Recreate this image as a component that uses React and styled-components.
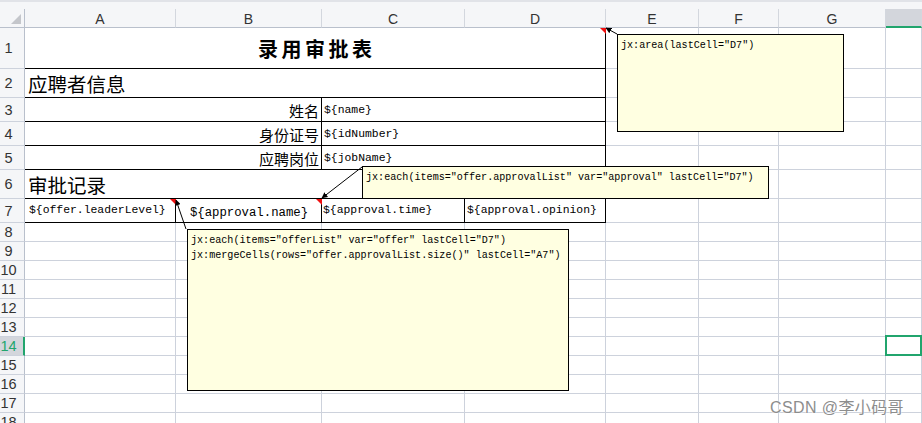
import React from 'react';
import styled, { createGlobalStyle, css } from 'styled-components';

const GRID = '#cdd2dc';
const HEAD_LINE = '#b9c0cc';
const DARK = '#000';
const GREEN = '#21a56d';
const HEAD_BG = '#f5f6f8';
const SEL_BG = '#d3d6dc';

const Global = createGlobalStyle`
  html, body { margin: 0; padding: 0; background: #fff; }
  body { width: 922px; height: 423px; overflow: hidden; }
`;

const Page = styled.div`
  position: relative;
  width: 922px;
  height: 423px;
  overflow: hidden;
  background: #fff;
  font-family: "Liberation Sans", Arial, sans-serif;
`;

const TopStrip = styled.div`
  box-sizing: border-box;
  height: 9px;
  background: ${HEAD_BG};
  border-top: 2px solid #e1e3e8;
`;

const Sheet = styled.div`
  display: grid;
  grid-template-columns: 25px 151px 146px 143px 141px 93px 80px 107px 1fr;
  grid-template-rows: 19px 41px 29px 24px 24px 24px 29px 24px repeat(11, 19px);
`;

const Corner = styled.div`
  position: relative;
  box-sizing: border-box;
  background: ${HEAD_BG};
  border-right: 1px solid ${HEAD_LINE};
  border-bottom: 1px solid ${HEAD_LINE};
  &::after {
    content: '';
    position: absolute;
    left: 11px;
    top: 5px;
    width: 0;
    height: 0;
    border-bottom: 10px solid #c4c6cb;
    border-left: 10px solid transparent;
  }
`;

const ColHead = styled.div`
  box-sizing: border-box;
  display: flex;
  align-items: center;
  justify-content: center;
  padding-top: 1px;
  font-size: 14px;
  color: #333;
  background: ${p => (p.$sel ? SEL_BG : HEAD_BG)};
  border-right: 1px solid #d3d7de;
  border-bottom: ${p => (p.$sel ? `2px solid ${GREEN}` : `1px solid ${HEAD_LINE}`)};
`;

const RowHead = styled.div`
  box-sizing: border-box;
  display: flex;
  align-items: center;
  justify-content: center;
  padding-right: ${p => (p.$sel ? 6 : 7)}px;
  font-size: 14.5px;
  color: ${p => (p.$sel ? GREEN : '#333')};
  background: ${p => (p.$sel ? SEL_BG : HEAD_BG)};
  border-right: ${p => (p.$sel ? `2px solid ${GREEN}` : `1px solid ${HEAD_LINE}`)};
  border-bottom: 1px solid ${GRID};
`;

const Cell = styled.div`
  position: relative;
  box-sizing: border-box;
  min-width: 0;
  display: flex;
  white-space: nowrap;
  grid-column: span ${p => p.$span || 1};
  align-items: ${p => p.$v || 'flex-end'};
  justify-content: ${p => p.$h || 'flex-start'};
  padding: ${p => p.$pad || '0'};
  border-right: 1px solid ${p => (p.$r ? DARK : GRID)};
  border-bottom: 1px solid ${p => (p.$b ? DARK : GRID)};
  ${p => p.$flag && css`
    &::before {
      content: '';
      position: absolute;
      top: 0;
      right: -1px;
      width: 0;
      height: 0;
      border-top: 6px solid #f01010;
      border-left: 6px solid transparent;
      z-index: 2;
    }
  `}
  ${p => p.$sel && css`
    &::after {
      content: '';
      position: absolute;
      top: -2px;
      left: -1px;
      right: -1px;
      bottom: -1px;
      border: 2px solid ${GREEN};
      z-index: 3;
    }
  `}
`;

const Title = styled.span`
  font-family: "Noto Sans CJK SC", sans-serif;
  font-weight: 700;
  font-size: 20px;
  letter-spacing: 3.5px;
  padding-left: 3.5px;
  color: #000;
  line-height: 1;
`;

const Section = styled.span`
  font-family: "Noto Sans CJK SC", sans-serif;
  font-size: 19.5px;
  line-height: 26px;
  color: #000;
`;

const Label = styled.span`
  font-family: "Noto Sans CJK SC", sans-serif;
  font-size: 15px;
  line-height: 20px;
  color: #000;
`;

const Value = styled.span`
  font-family: "Liberation Mono", "Noto Sans CJK SC", monospace;
  font-size: ${p => p.$size || 11.4}px;
  line-height: 17px;
  color: #000;
`;

const Note = styled.div`
  position: absolute;
  box-sizing: border-box;
  z-index: 5;
  background: #ffffe1;
  border: 1px solid #000;
  padding: 3px 3px;
  font-family: "Liberation Mono", monospace;
  font-size: 10.1px;
  line-height: 15px;
  color: #000;
  white-space: pre;
`;

const Arrows = styled.svg`
  position: absolute;
  left: 0;
  top: 0;
  z-index: 6;
  pointer-events: none;
`;

const Watermark = styled.div`
  position: absolute;
  left: 770px;
  top: 394px;
  z-index: 7;
  font-family: "Liberation Sans", "Noto Sans CJK SC", sans-serif;
  font-size: 16px;
  letter-spacing: 0.4px;
  color: #8d8d8d;
  text-shadow: 0 0 2px #fff, 0 0 1px #fff;
`;

const COLS = ['A', 'B', 'C', 'D', 'E', 'F', 'G', ''];

const plain = n => Array.from({ length: n }, () => ({}));

const ROWS = [
  { n: 1, cells: [{ span: 4, r: 1, b: 1, h: 'center', v: 'center', pad: '2px 0 0 0', el: <Title>录用审批表</Title>, flag: 1 }, ...plain(4)] },
  { n: 2, cells: [{ span: 4, r: 1, b: 1, pad: '0 0 0 3px', el: <Section>应聘者信息</Section> }, ...plain(4)] },
  { n: 3, cells: [{ span: 2, r: 1, b: 1, h: 'flex-end', pad: '0 2px 0 0', el: <Label>姓名</Label> }, { span: 2, r: 1, b: 1, pad: '0 0 2px 2px', el: <Value>{'${name}'}</Value> }, ...plain(4)] },
  { n: 4, cells: [{ span: 2, r: 1, b: 1, h: 'flex-end', pad: '0 2px 0 0', el: <Label>身份证号</Label> }, { span: 2, r: 1, b: 1, pad: '0 0 2px 2px', el: <Value>{'${idNumber}'}</Value> }, ...plain(4)] },
  { n: 5, cells: [{ span: 2, r: 1, b: 1, h: 'flex-end', pad: '0 2px 0 0', el: <Label>应聘岗位</Label> }, { span: 2, r: 1, b: 1, pad: '0 0 2px 2px', el: <Value>{'${jobName}'}</Value> }, ...plain(4)] },
  { n: 6, cells: [{ span: 4, r: 1, b: 1, pad: '0 0 0 3px', el: <Section>审批记录</Section> }, ...plain(4)] },
  {
    n: 7,
    cells: [
      { r: 1, b: 1, v: 'center', pad: '0 0 0 4px', flag: 1, el: <Value>{'${offer.leaderLevel}'}</Value> },
      { r: 1, b: 1, h: 'center', pad: '0 0 0 1px', flag: 1, el: <Value $size={12.3}>{'${approval.name}'}</Value> },
      { r: 1, b: 1, v: 'center', pad: '0 0 0 1px', el: <Value>{'${approval.time}'}</Value> },
      { r: 1, b: 1, v: 'center', pad: '0 0 0 2px', el: <Value>{'${approval.opinion}'}</Value> },
      ...plain(4),
    ],
  },
  ...Array.from({ length: 11 }, (_, i) => ({ n: i + 8, cells: plain(8) })),
];

const NOTES = [
  { x: 617, y: 34, w: 227, h: 98, text: 'jx:area(lastCell="D7")' },
  { x: 362, y: 166, w: 407, h: 33, text: 'jx:each(items="offer.approvalList" var="approval" lastCell="D7")' },
  { x: 187, y: 229, w: 382, h: 162, text: 'jx:each(items="offerList" var="offer" lastCell="D7")\njx:mergeCells(rows="offer.approvalList.size()" lastCell="A7")' },
];

const LINES = [
  { x1: 617, y1: 34, x2: 606, y2: 28 },
  { x1: 362, y1: 167, x2: 322, y2: 198 },
  { x1: 186, y1: 229, x2: 176, y2: 200 },
];

export default function App() {
  return (
    <Page>
      <Global />
      <TopStrip />
      <Sheet>
        <Corner />
        {COLS.map((c, i) => (
          <ColHead key={i} $sel={i === 7}>{c}</ColHead>
        ))}
        {ROWS.map(row => (
          <React.Fragment key={row.n}>
            <RowHead $sel={row.n === 14}>{row.n}</RowHead>
            {row.cells.map((c, i) => (
              <Cell
                key={i}
                $span={c.span}
                $r={c.r}
                $b={c.b}
                $h={c.h}
                $v={c.v}
                $pad={c.pad}
                $flag={c.flag}
                $sel={row.n === 14 && i === 7}
              >
                {c.el}
              </Cell>
            ))}
          </React.Fragment>
        ))}
      </Sheet>
      {NOTES.map((n, i) => (
        <Note key={i} style={{ left: n.x, top: n.y, width: n.w, height: n.h }}>{n.text}</Note>
      ))}
      <Arrows width="922" height="423" viewBox="0 0 922 423">
        <defs>
          <marker id="ah" viewBox="0 0 10 10" refX="9" refY="5" markerWidth="6" markerHeight="6" orient="auto">
            <path d="M0 0 L10 5 L0 10 z" fill="#000" />
          </marker>
        </defs>
        {LINES.map((l, i) => (
          <line key={i} {...l} stroke="#000" strokeWidth="1" markerEnd="url(#ah)" />
        ))}
      </Arrows>
      <Watermark>CSDN @李小码哥</Watermark>
    </Page>
  );
}
